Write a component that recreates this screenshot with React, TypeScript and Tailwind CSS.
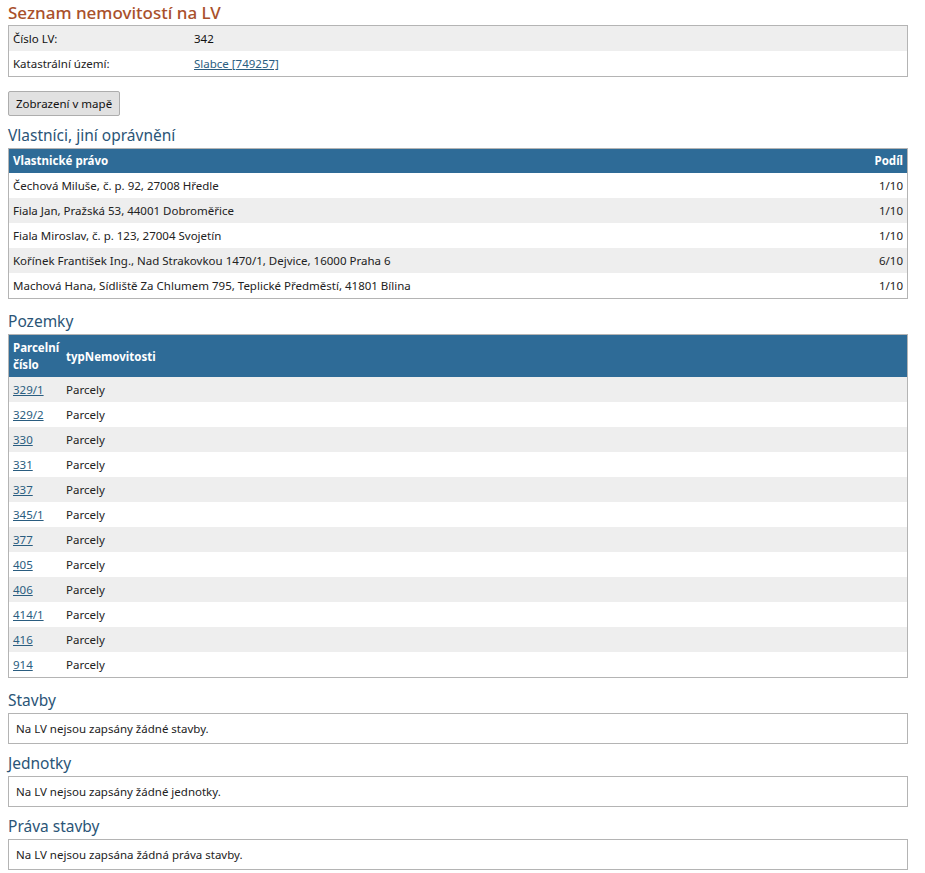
import React from "react"

const owners = [
  { name: "Čechová Miluše, č. p. 92, 27008 Hředle", share: "1/10" },
  { name: "Fiala Jan, Pražská 53, 44001 Dobroměřice", share: "1/10" },
  { name: "Fiala Miroslav, č. p. 123, 27004 Svojetín", share: "1/10" },
  { name: "Kořínek František Ing., Nad Strakovkou 1470/1, Dejvice, 16000 Praha 6", share: "6/10" },
  { name: "Machová Hana, Sídliště Za Chlumem 795, Teplické Předměstí, 41801 Bílina", share: "1/10" },
]

const parcels = ["329/1", "329/2", "330", "331", "337", "345/1", "377", "405", "406", "414/1", "416", "914"]

function Heading({ children }: { children: React.ReactNode }) {
  return <h2 className="text-[15.5px] leading-[20px] text-[#2b5577] mt-[9px] mb-[3px]">{children}</h2>
}

function EmptyBox({ text }: { text: string }) {
  return (
    <div className="border border-[#b4b4b4] h-[31px] flex items-center px-[7px] text-[#222]">{text}</div>
  )
}

export default function App() {
  return (
    <div
      className="bg-white min-h-[873px] px-[8px] pt-0 pr-[17px] text-[11.5px] text-[#222]"
      style={{ fontFamily: '"Noto Sans", "Open Sans", sans-serif' }}
    >
      <h1 className="text-[17px] leading-[25px] font-medium text-[#a9502b]">Seznam nemovitostí na LV</h1>

      {/* základní údaje */}
      <div className="border border-[#b4b4b4]">
        <div className="flex h-[25px] items-center bg-[#eeeeee] px-[4px]">
          <div className="w-[181px] text-[#111]">Číslo LV:</div>
          <div className="text-[#111]">342</div>
        </div>
        <div className="flex h-[25px] items-center bg-white px-[4px]">
          <div className="w-[181px]">Katastrální území:</div>
          <a href="#" className="text-[#2a5d80] underline">Slabce [749257]</a>
        </div>
      </div>

      <button className="mt-[14px] h-[25px] px-[7px] border border-[#adadad] rounded-[2px] bg-[#e1e1e1] text-[#111]">
        Zobrazení v mapě
      </button>

      <Heading>Vlastníci, jiní oprávnění</Heading>
      <div className="border border-[#b4b4b4]">
        <div className="flex h-[24px] items-center bg-[#2e6b97] text-white font-bold px-[4px]">
          <div className="flex-1">Vlastnické právo</div>
          <div>Podíl</div>
        </div>
        {owners.map((o, i) => (
          <div
            key={o.name}
            className={`flex h-[25px] items-center px-[4px] ${i % 2 === 1 ? "bg-[#eeeeee]" : "bg-white"}`}
          >
            <div className="flex-1">{o.name}</div>
            <div>{o.share}</div>
          </div>
        ))}
      </div>

      <div className="mt-[12px]">
        <Heading>Pozemky</Heading>
      </div>
      <div className="border border-[#b4b4b4]">
        <div className="flex h-[42px] items-center bg-[#2e6b97] text-white font-bold px-[4px] leading-[17px]">
          <div className="w-[53px]">
            Parcelní
            <br />
            číslo
          </div>
          <div>typNemovitosti</div>
        </div>
        {parcels.map((p, i) => (
          <div
            key={p}
            className={`flex h-[25px] items-center px-[4px] ${i % 2 === 0 ? "bg-[#eeeeee]" : "bg-white"}`}
          >
            <div className="w-[53px]">
              <a href="#" className="text-[#2a5d80] underline">{p}</a>
            </div>
            <div>Parcely</div>
          </div>
        ))}
      </div>

      <div className="mt-[12px]">
        <Heading>Stavby</Heading>
      </div>
      <EmptyBox text="Na LV nejsou zapsány žádné stavby." />

      <Heading>Jednotky</Heading>
      <EmptyBox text="Na LV nejsou zapsány žádné jednotky." />

      <Heading>Práva stavby</Heading>
      <EmptyBox text="Na LV nejsou zapsána žádná práva stavby." />
    </div>
  )
}
